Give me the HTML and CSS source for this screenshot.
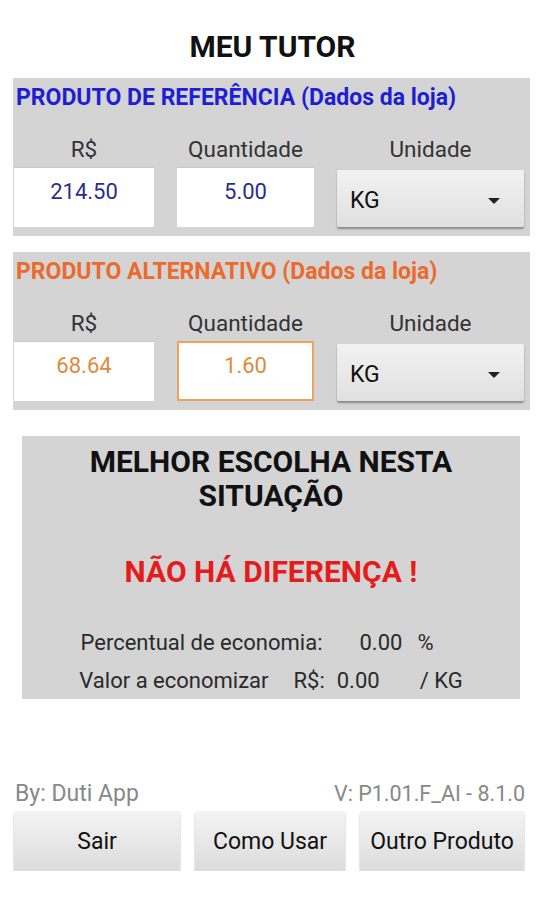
FILE: index.html
```html
<!DOCTYPE html>
<html lang="pt">
<head>
    <meta charset="UTF-8">
    <meta name="viewport" content="width=device-width, initial-scale=1.0">
    <title>Meu Tutor</title>
    <link rel="stylesheet" href="styles.css">
</head>
<body>
    <h1 class="title">MEU TUTOR</h1>

    <div class="product product-ref">
        <div class="product-head">PRODUTO DE REFERÊNCIA (Dados da loja)</div>
        <div class="fields">
            <span class="label">R$</span>
            <span class="label">Quantidade</span>
            <span class="label">Unidade</span>
            <div class="field">214.50</div>
            <div class="field">5.00</div>
            <div class="select">
                <span>KG</span>
                <span class="arrow"></span>
            </div>
        </div>
    </div>

    <div class="product product-alt">
        <div class="product-head">PRODUTO ALTERNATIVO (Dados da loja)</div>
        <div class="fields">
            <span class="label">R$</span>
            <span class="label">Quantidade</span>
            <span class="label">Unidade</span>
            <div class="field">68.64</div>
            <div class="field focused">1.60</div>
            <div class="select">
                <span>KG</span>
                <span class="arrow"></span>
            </div>
        </div>
    </div>

    <div class="result">
        <div class="result-title">MELHOR ESCOLHA NESTA<br>SITUAÇÃO</div>
        <div class="verdict">NÃO HÁ DIFERENÇA !</div>
        <div class="result-row row-percent">
            <span>Percentual de economia:</span>
            <span class="num">0.00</span>
            <span class="pct">%</span>
        </div>
        <div class="result-row row-value">
            <span>Valor a economizar</span>
            <span class="cur">R$:</span>
            <span class="num">0.00</span>
            <span class="unit">/ KG</span>
        </div>
    </div>

    <div class="footer">
        <span class="by">By: Duti App</span>
        <span class="version">V: P1.01.F_AI - 8.1.0</span>
    </div>
    <div class="buttons">
        <button class="btn btn-exit">Sair</button>
        <button class="btn btn-help">Como Usar</button>
        <button class="btn btn-other">Outro Produto</button>
    </div>
</body>
</html>
```

FILE: styles.css
```css
html,
body {
    margin: 0;
    padding: 0;
    background: #fff;
    font-family: Roboto, 'Liberation Sans', sans-serif;
    color: #222;
}

body {
    width: 545px;
}

.title {
    margin: 0;
    padding-top: 32px;
    font-size: 30px;
    line-height: 30px;
    font-weight: bold;
    text-align: center;
    color: #111;
}

.product {
    margin: 16px 15px 0 13px;
    padding: 8px 6px 9px 1px;
    background: #d4d4d4;
}

.product-head {
    padding-left: 2px;
    font-size: 23px;
    line-height: 24px;
    font-weight: bold;
    white-space: nowrap;
}

.product-ref .product-head {
    color: #1e1ed2;
}

.product-alt .product-head {
    color: #ec6a2c;
}

.fields {
    display: grid;
    grid-template-columns: 140px 137px 187px;
    column-gap: 23px;
    row-gap: 6px;
    margin-top: 27px;
}

.label {
    font-size: 22.5px;
    line-height: 24px;
    text-align: center;
    color: #333;
}

.field {
    height: 60px;
    box-sizing: border-box;
    padding-top: 13px;
    background: #fff;
    box-shadow: inset 0 1px 0 #c8c8c8;
    font-size: 22px;
    line-height: 24px;
    text-align: center;
}

.product-ref .field {
    color: #2c2c8e;
}

.product-alt .field {
    color: #e08a3c;
}

.field.focused {
    border: 2px solid #eea25c;
    padding-top: 11px;
    box-shadow: none;
}

.select {
    display: flex;
    align-items: center;
    justify-content: space-between;
    margin-top: 3px;
    height: 57px;
    box-sizing: border-box;
    padding: 4px 24px 0 13px;
    background: linear-gradient(#f2f2f2, #e0e0e0);
    box-shadow: 0 2px 2px rgba(0, 0, 0, 0.35);
    border-radius: 2px;
    font-size: 23px;
    color: #111;
}

.arrow {
    width: 0;
    height: 0;
    border-left: 6px solid transparent;
    border-right: 6px solid transparent;
    border-top: 6px solid #222;
}

.result {
    margin: 26px 25px 0 22px;
    padding: 9px 0 1px;
    background: #d4d4d4;
    text-align: center;
}

.result-title {
    font-size: 30px;
    line-height: 34px;
    font-weight: bold;
    color: #111;
}

.verdict {
    margin-top: 42px;
    font-size: 30px;
    line-height: 34px;
    font-weight: bold;
    color: #e51c1c;
}

.result-row {
    display: flex;
    justify-content: center;
    font-size: 22px;
    color: #2a2a2a;
    white-space: nowrap;
}

.row-percent {
    margin-top: 35px;
    padding-right: 28px;
    line-height: 38px;
}

.row-percent .num {
    margin-left: 37px;
}

.row-percent .pct {
    margin-left: 15px;
}

.row-value {
    margin-top: 2px;
    line-height: 34px;
}

.row-value .cur {
    margin-left: 25px;
}

.row-value .num {
    margin-left: 12px;
}

.row-value .unit {
    margin-left: 40px;
}

.footer {
    display: flex;
    justify-content: space-between;
    align-items: baseline;
    margin: 82px 20px 0 15px;
    font-size: 23px;
    line-height: 26px;
    color: #888;
}

.version {
    font-size: 21.5px;
}

.buttons {
    display: flex;
    gap: 15px;
    margin: 4px 20px 0 14px;
}

.btn {
    height: 60px;
    padding: 0;
    border: none;
    border-radius: 2px;
    background: linear-gradient(#f3f3f3, #dcdcdc);
    box-shadow: 0 2px 2px rgba(0, 0, 0, 0.35);
    font-family: inherit;
    font-size: 23px;
    color: #111;
}

.btn-exit {
    width: 166px;
}

.btn-help {
    width: 150px;
}

.btn-other {
    width: 164px;
}
```
